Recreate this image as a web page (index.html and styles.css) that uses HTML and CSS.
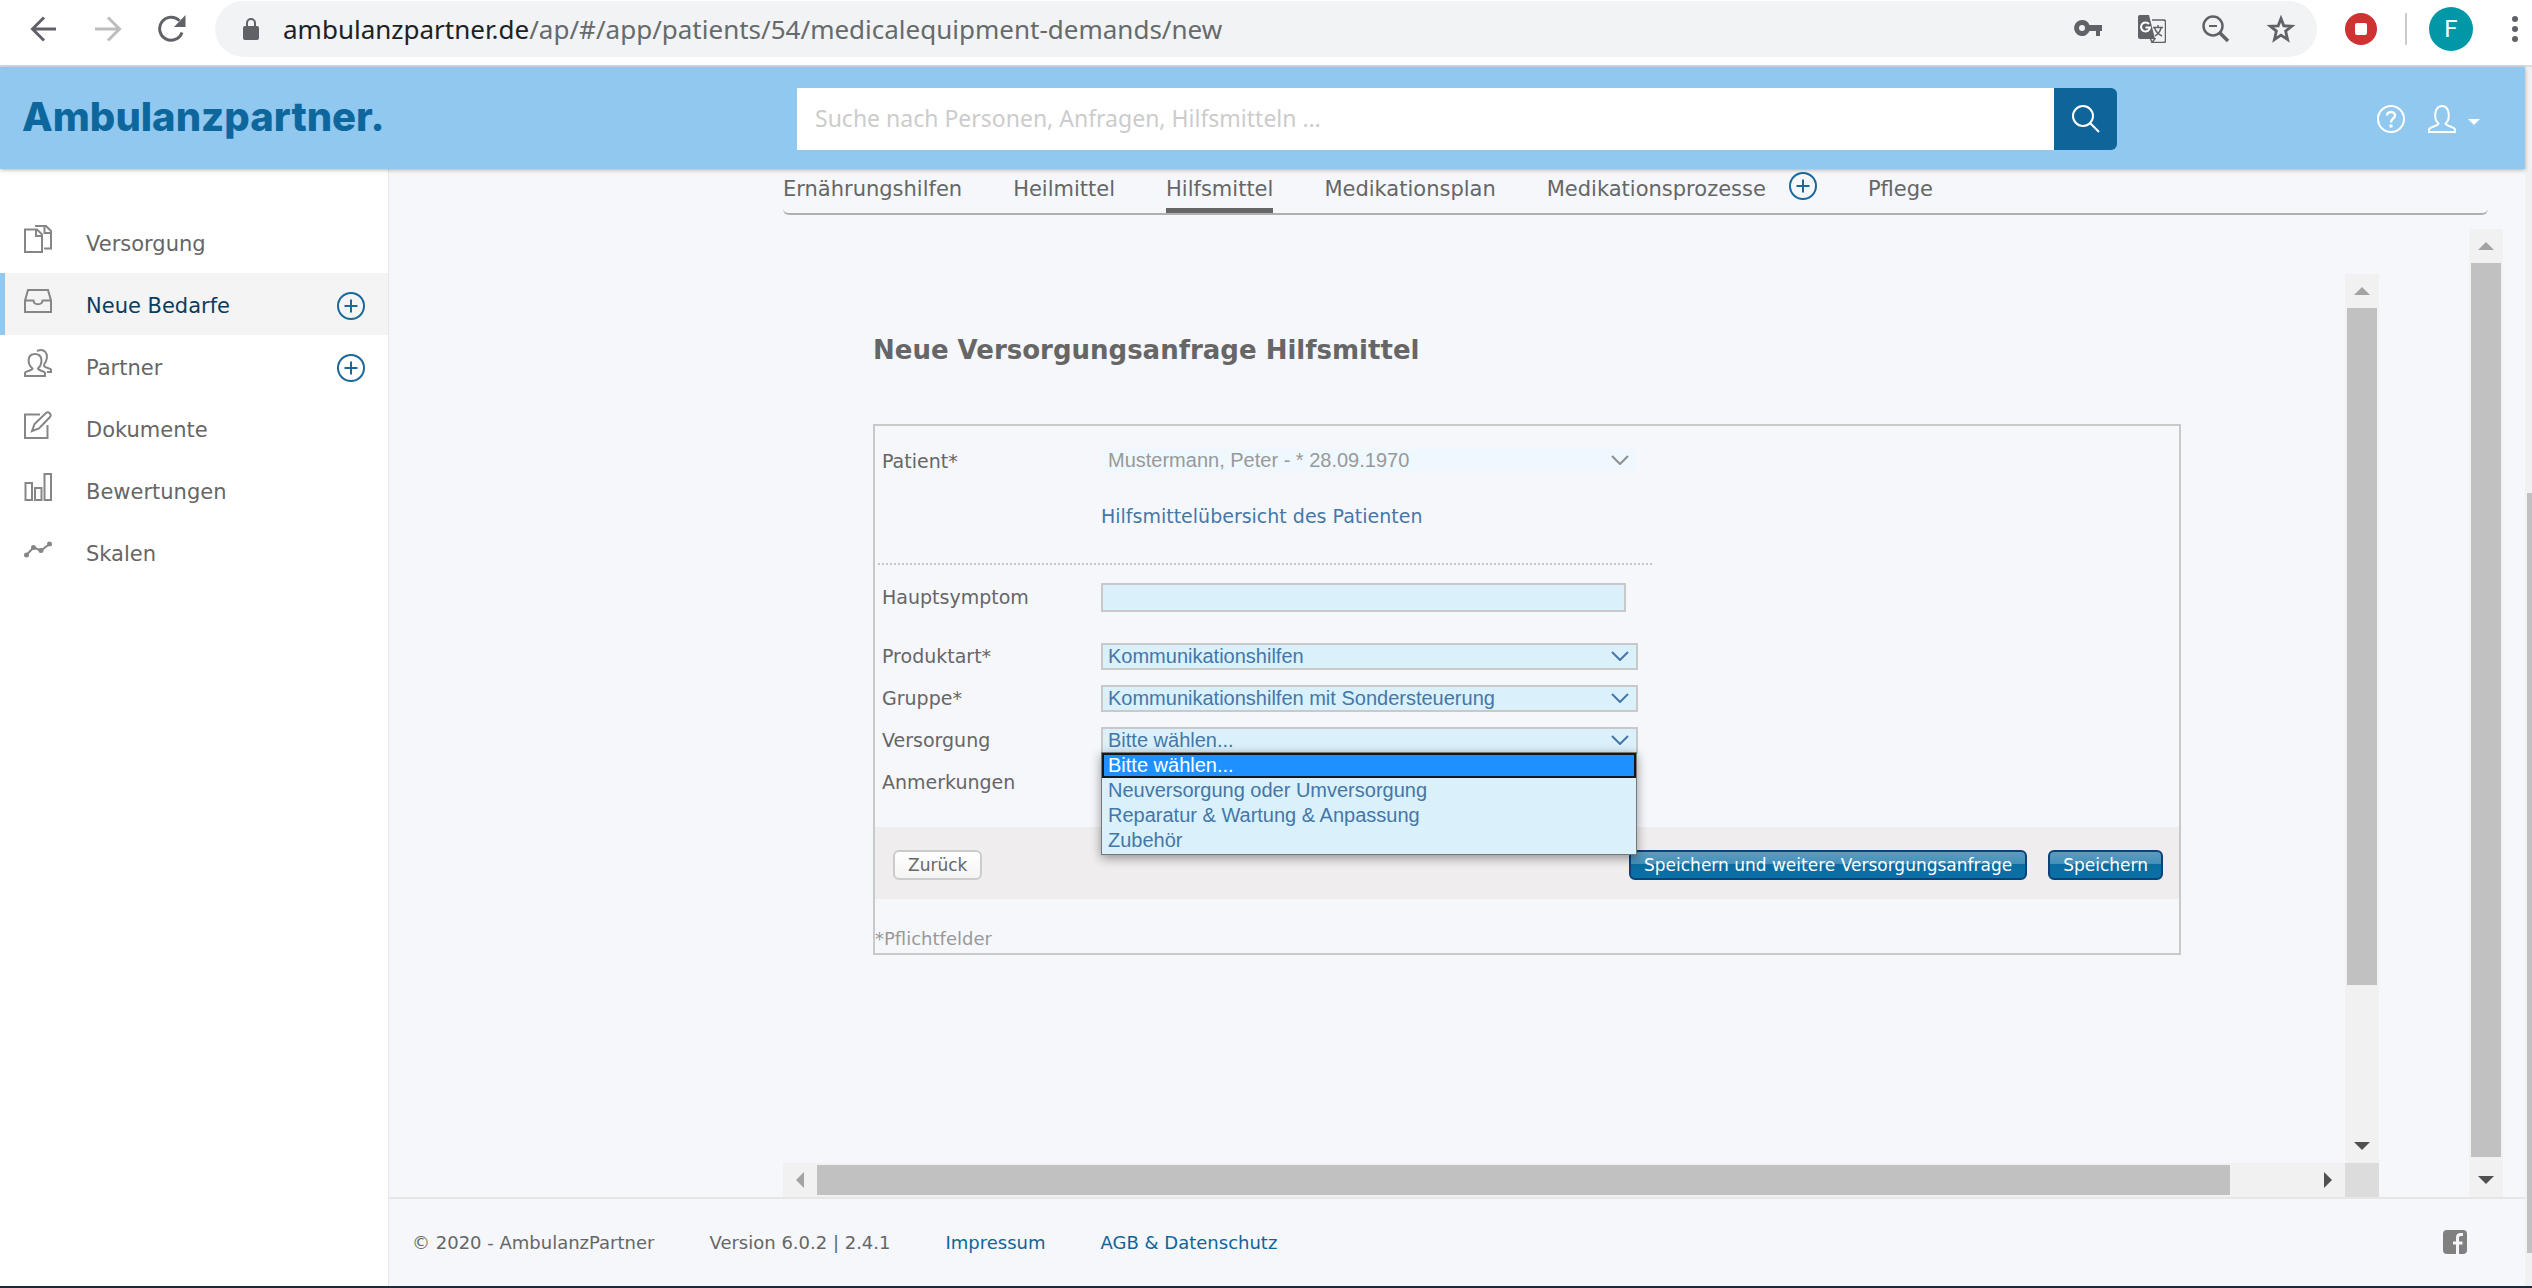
FILE: index.html
```html
<!DOCTYPE html>
<html lang="de">
<head>
<meta charset="UTF-8">
<meta name="viewport" content="width=device-width, initial-scale=1.0">
<title>Ambulanzpartner</title>
<link rel="stylesheet" href="styles.css">
</head>
<body>

<!-- Browserleiste -->
<div class="browser-bar">
    <button class="nav-btn" aria-label="Zurück">
        <svg width="28" height="28" viewBox="0 0 28 28"><path d="M26 14H3M14 2.500L2.500 14L14 25.500" fill="none" stroke="#5f6368" stroke-width="3"/></svg>
    </button>
    <button class="nav-btn" aria-label="Vorwärts">
        <svg width="28" height="28" viewBox="0 0 28 28"><path d="M1 14H25M14 2.500L25.500 14L14 25.500" fill="none" stroke="#bdbdbd" stroke-width="3"/></svg>
    </button>
    <button class="nav-btn" aria-label="Neu laden">
        <svg width="28" height="28" viewBox="0 0 28 28"><path d="M24 17.500A11.500 11.500 0 1 1 21.500 5.800" fill="none" stroke="#5f6368" stroke-width="3"/><path d="M27.500 0V12H16z" fill="#5f6368"/></svg>
    </button>
    <div class="address">
        <svg width="16" height="22" viewBox="0 0 16 22"><rect y="8" width="16" height="14" rx="2" fill="#5f6368"/><path d="M4 9V5a4 4 0 0 1 8 0V9" fill="none" stroke="#5f6368" stroke-width="2"/></svg>
        <span class="url"><span class="host">ambulanzpartner.de</span>/ap/#/app/patients/54/medicalequipment-demands/new</span>
        <div class="address-icons">
            <svg width="28" height="28" viewBox="0 0 28 28"><path fill-rule="evenodd" fill="#5f6368" d="M8 5a8 8 0 1 0 7.500 11H22v5h4v-5h2v-6H15.500A8 8 0 0 0 8 5zM8 10a3 3 0 1 1 0 6a3 3 0 0 1 0-6z"/></svg>
            <svg width="28" height="28" viewBox="0 0 28 28"><path d="M2 0H11L17 24H2a2 2 0 0 1-2-2V2a2 2 0 0 1 2-2z" fill="#5f6368"/><path d="M14 5H25.500a2 2 0 0 1 2 2V25.500a2 2 0 0 1-2 2H14L17.500 23M14 27L12.500 24" fill="none" stroke="#5f6368" stroke-width="1.500"/><path d="M11 9A4.500 4.500 0 1 0 12 12.500H7.500" fill="none" stroke="#fff" stroke-width="2"/><path d="M15 12.500H25M20 10V12.500M16.500 13C18 17 20 19 24 21M23 13C22 17 20 19 17 21" fill="none" stroke="#5f6368" stroke-width="1.500"/></svg>
            <svg width="28" height="28" viewBox="0 0 28 28"><circle cx="11" cy="11" r="9.500" fill="none" stroke="#5f6368" stroke-width="2.500"/><path d="M7 11H15" stroke="#5f6368" stroke-width="2"/><path d="M18 18L26 26" stroke="#5f6368" stroke-width="3.500"/></svg>
            <svg width="30" height="28" viewBox="0 0 30 28"><path d="M15 3.500L17.800 10.800L25.700 11.200L19.600 16.100L21.600 24.500L15 20.100L8.400 24.500L10.400 16.100L4.300 11.200L12.200 10.800z" fill="none" stroke="#5f6368" stroke-width="2.800"/></svg>
        </div>
    </div>
    <svg class="record" width="32" height="32" viewBox="0 0 32 32"><circle cx="16" cy="16" r="16" fill="#cf3232"/><rect x="10" y="10" width="12" height="12" rx="2" fill="#fff"/></svg>
    <span class="divider"></span>
    <button class="avatar" aria-label="Profil">F</button>
    <button class="menu-dots" aria-label="Menü"><i></i><i></i><i></i></button>
</div>

<div class="window">
    <div class="app">
        <header class="header">
            <a class="logo" href="#">Ambulanzpartner.</a>
            <form class="search">
                <input type="text" placeholder="Suche nach Personen, Anfragen, Hilfsmitteln …" aria-label="Suche">
                <button type="button" aria-label="Suchen">
                    <svg width="28" height="28" viewBox="0 0 28 28" fill="none" stroke="#fff" stroke-width="2"><circle cx="11" cy="11" r="10"/><path d="M18 18L27 27"/></svg>
                </button>
            </form>
            <div class="header-icons">
                <svg width="28" height="28" viewBox="0 0 28 28" fill="none" stroke="#fff" stroke-width="2"><circle cx="14" cy="14" r="13"/><path d="M10 10.500C10 5.800 18 5.800 18 10.500C18 13.500 14 13.500 14 17.500" stroke-width="2.400"/><circle cx="14" cy="21" r="0.800"/></svg>
                <svg width="28" height="28" viewBox="0 0 28 28" fill="none" stroke="#fff" stroke-width="2"><path d="M1 27V24.500C1 22 10 21 10.500 18.500C5.500 15 6 1 14 1S22.500 15 17.500 18.500C18 21 27 22 27 24.500V27z"/></svg>
                <svg class="caret" width="12" height="6" viewBox="0 0 12 6"><path d="M0 0H12L6 6z" fill="#fff"/></svg>
            </div>
        </header>

        <div class="main">
            <nav class="sidebar">
                <a class="nav-item" href="#">
                    <svg width="28" height="28" viewBox="0 0 28 28"><path d="M1 4.500H13L18 9.500V27H1zM12 4.500V11H18M11 1H22L27 6V23.500H20M20.500 1V8H27"/></svg>
                    <span>Versorgung</span>
                </a>
                <a class="nav-item active" href="#">
                    <svg width="28" height="28" viewBox="0 0 28 28"><path d="M1 13.500L4 3H24L27 13.500V25H1zM1 13.500H9.500C10 18.500 18 18.500 18.500 13.500H27"/></svg>
                    <span>Neue Bedarfe</span>
                    <svg class="plus" width="28" height="28" viewBox="0 0 28 28"><circle cx="14" cy="14" r="13"/><path d="M14 7.500V20.500M7.500 14H20.500"/></svg>
                </a>
                <a class="nav-item" href="#">
                    <svg width="28" height="28" viewBox="0 0 28 28"><path d="M1 27V24C1 22 8 22 8.500 19.500C3 15 3 5 11 5S19 15 14 19.500C14.500 22 21 22 21 24V27zM13 2C20 -1 25 4 22 12C21.500 14 20 15 20 16.500C20 19 27 19 27 21V23H23"/></svg>
                    <span>Partner</span>
                    <svg class="plus" width="28" height="28" viewBox="0 0 28 28"><circle cx="14" cy="14" r="13"/><path d="M14 7.500V20.500M7.500 14H20.500"/></svg>
                </a>
                <a class="nav-item" href="#">
                    <svg width="28" height="28" viewBox="0 0 28 28"><path d="M16 3.500H1V27H23.500V14M8 20L10.500 13L22 2C24.500 0 28 3.500 26 6L15 17.500z"/></svg>
                    <span>Dokumente</span>
                </a>
                <a class="nav-item" href="#">
                    <svg width="28" height="28" viewBox="0 0 28 28"><path d="M1.500 10H8V27H1.500zM11 15H17.500V27H11zM20.500 1H27V27H20.500z"/></svg>
                    <span>Bewertungen</span>
                </a>
                <a class="nav-item" href="#">
                    <svg width="28" height="28" viewBox="0 0 28 28"><path d="M2.500 20L9.500 12.500L17 15.500L25.500 9"/><g fill="#868686"><circle cx="2.500" cy="20" r="1.500"/><circle cx="9.500" cy="12.500" r="1.500"/><circle cx="17" cy="15.500" r="1.500"/><circle cx="25.500" cy="9" r="1.500"/></g></svg>
                    <span>Skalen</span>
                </a>
            </nav>

            <div class="content">
                <div class="tabs">
                    <a href="#">Ernährungshilfen</a>
                    <a href="#">Heilmittel</a>
                    <a class="active" href="#">Hilfsmittel</a>
                    <a href="#">Medikationsplan</a>
                    <a class="with-plus" href="#">Medikationsprozesse
                        <svg class="plus" width="28" height="28" viewBox="0 0 28 28"><circle cx="14" cy="14" r="13"/><path d="M14 7.500V20.500M7.500 14H20.500"/></svg>
                    </a>
                    <a href="#">Pflege</a>
                </div>

                <div class="outer-frame">
                    <div class="inner-frame">
                        <div class="frame-body">
                            <h1>Neue Versorgungsanfrage Hilfsmittel</h1>

                            <form class="panel">
                                <div class="row row-patient">
                                    <label for="patient">Patient*</label>
                                    <div class="select">
                                        <select id="patient" disabled><option>Mustermann, Peter - * 28.09.1970</option></select>
                                        <svg width="18" height="10" viewBox="0 0 18 10"><path d="M1 1L9 9L17 1"/></svg>
                                    </div>
                                </div>
                                <div class="row row-link">
                                    <a href="#">Hilfsmittelübersicht des Patienten</a>
                                </div>
                                <div class="separator"></div>
                                <div class="row row-symptom">
                                    <label for="symptom">Hauptsymptom</label>
                                    <input type="text" id="symptom">
                                </div>
                                <div class="row">
                                    <label for="produktart">Produktart*</label>
                                    <div class="select">
                                        <select id="produktart"><option>Kommunikationshilfen</option></select>
                                        <svg width="18" height="10" viewBox="0 0 18 10"><path d="M1 1L9 9L17 1"/></svg>
                                    </div>
                                </div>
                                <div class="row">
                                    <label for="gruppe">Gruppe*</label>
                                    <div class="select">
                                        <select id="gruppe"><option>Kommunikationshilfen mit Sondersteuerung</option></select>
                                        <svg width="18" height="10" viewBox="0 0 18 10"><path d="M1 1L9 9L17 1"/></svg>
                                    </div>
                                </div>
                                <div class="row">
                                    <label for="versorgung">Versorgung</label>
                                    <div class="select">
                                        <select id="versorgung"><option>Bitte wählen...</option></select>
                                        <svg width="18" height="10" viewBox="0 0 18 10"><path d="M1 1L9 9L17 1"/></svg>
                                        <ul class="options" role="listbox" aria-label="Versorgung">
                                            <li class="selected" role="option" aria-selected="true">Bitte wählen...</li>
                                            <li role="option">Neuversorgung oder Umversorgung</li>
                                            <li role="option">Reparatur &amp; Wartung &amp; Anpassung</li>
                                            <li role="option">Zubehör</li>
                                        </ul>
                                    </div>
                                </div>
                                <div class="row">
                                    <span class="label">Anmerkungen</span>
                                </div>
                                <div class="actions">
                                    <button type="button" class="btn">Zurück</button>
                                    <button type="button" class="btn btn-blue push">Speichern und weitere Versorgungsanfrage</button>
                                    <button type="button" class="btn btn-blue">Speichern</button>
                                </div>
                                <p class="hint">*Pflichtfelder</p>
                            </form>
                        </div>
                        <div class="scroll-v">
                            <span class="arrow up"></span>
                            <span class="track"><span class="thumb thumb-inner"></span></span>
                            <span class="arrow down"></span>
                        </div>
                        <div class="scroll-h">
                            <span class="arrow left"></span>
                            <span class="track"><span class="thumb thumb-bottom"></span></span>
                            <span class="arrow right"></span>
                        </div>
                        <div class="corner"></div>
                    </div>
                    <div class="scroll-v">
                        <span class="arrow up"></span>
                        <span class="track"><span class="thumb thumb-outer"></span></span>
                        <span class="arrow down"></span>
                    </div>
                </div>

                <footer class="footer">
                    <span>© 2020 - AmbulanzPartner</span>
                    <span>Version 6.0.2 | 2.4.1</span>
                    <a href="#">Impressum</a>
                    <a href="#">AGB &amp; Datenschutz</a>
                    <a class="facebook" href="#" aria-label="Facebook">
                        <svg width="24" height="24" viewBox="0 0 24 24"><rect width="24" height="24" rx="4" fill="#808080"/><path d="M14.500 24V7.500Q14.500 4.500 17.500 4.500H20M10 13H19.500" fill="none" stroke="#f5f7fb" stroke-width="3"/></svg>
                    </a>
                </footer>
            </div>
        </div>
    </div>
    <div class="page-scroll"><span></span></div>
</div>

</body>
</html>
```
FILE: styles.css
```css
* {
    box-sizing: border-box;
}

html, body {
    height: 100%;
    margin: 0;
}

body {
    display: flex;
    flex-direction: column;
    background: #f5f7fb;
    border-bottom: 2px solid #1c2a3c;
    color: #666;
    font-family: "DejaVu Sans", Verdana, sans-serif;
    font-size: 21px;
    overflow: hidden;
}

a {
    color: inherit;
    text-decoration: none;
}

button {
    border: 0;
    padding: 0;
    background: none;
    font-family: inherit;
}

svg {
    display: block;
    flex: none;
}

/* Browserleiste */
.browser-bar {
    display: flex;
    align-items: center;
    height: 67px;
    padding: 0 14px 8px 30px;
    background: #fff;
    border-bottom: 2px solid #dadce0;
}

.nav-btn {
    margin-right: 36px;
}

.address {
    flex: 1;
    display: flex;
    align-items: center;
    height: 56px;
    margin-left: -7px;
    padding: 0 21px 0 28px;
    border-radius: 28px;
    background: #f1f3f4;
}

.url {
    margin-left: 24px;
    font-family: "Noto Sans", "Open Sans", sans-serif;
    font-size: 26px;
    line-height: 36px;
    color: #666a6d;
}

.host {
    color: #202124;
}

.address-icons {
    display: flex;
    gap: 36px;
    margin-left: auto;
}

.record {
    margin-left: 28px;
}

.divider {
    width: 2px;
    height: 32px;
    margin: 0 22px 0 28px;
    background: #ccc;
}

.avatar {
    width: 44px;
    height: 44px;
    border-radius: 50%;
    background: #0097a7;
    color: #fff;
    font-family: Roboto, sans-serif;
    font-size: 24px;
}

.menu-dots {
    display: grid;
    gap: 4px;
    margin-left: 39px;
}

.menu-dots i {
    width: 6px;
    height: 6px;
    border-radius: 50%;
    background: #5f6368;
}

/* Fenster */
.window {
    flex: 1;
    display: flex;
    min-height: 0;
}

.app {
    flex: 1;
    display: flex;
    flex-direction: column;
    min-width: 0;
}

.page-scroll {
    width: 7px;
    padding: 426px 0 33px 2px;
    background: #f1f1f1;
}

.page-scroll span {
    display: block;
    height: 100%;
    background: #c1c1c1;
}

/* Kopfzeile */
.header {
    display: flex;
    align-items: center;
    height: 102px;
    padding: 2px 45px 0 22px;
    background: #91c8f0;
    box-shadow: 0 1px 4px rgba(0, 0, 0, 0.3);
    z-index: 1;
}

.logo {
    width: 775px;
    padding-bottom: 5px;
    color: #0d679c;
    font-family: Inter, sans-serif;
    font-size: 40px;
    font-weight: 800;
}

.search {
    display: flex;
    flex: 1;
    height: 62px;
    margin-right: 260px;
}

.search input {
    flex: 1;
    padding: 0 18px 3px;
    border: 0;
    background: #fff;
    font-family: "Noto Sans", sans-serif;
    font-size: 23px;
}

.search input::placeholder {
    color: #ccc;
}

.search button {
    display: flex;
    align-items: center;
    justify-content: center;
    width: 63px;
    border-radius: 0 6px 6px 0;
    background: #0f6599;
}

.header-icons {
    display: flex;
    align-items: center;
    gap: 23px;
}

.header-icons .caret {
    margin: 6px 0 0 -11px;
}

/* Navigation links */
.main {
    flex: 1;
    display: flex;
    min-height: 0;
}

.sidebar {
    width: 389px;
    padding-top: 42px;
    background: #fff;
    border-right: 1px solid #e4e6ea;
}

.nav-item {
    display: flex;
    align-items: center;
    height: 62px;
    padding: 0 23px 0 19px;
    border-left: 5px solid transparent;
}

.nav-item.active {
    background: #f4f4f4;
    border-color: #91c8f0;
    color: #0a3c5f;
}

.nav-item span {
    padding-top: 3px;
}

.nav-item svg {
    margin-right: 34px;
    margin-bottom: 6px;
    fill: none;
    stroke: #868686;
    stroke-width: 2;
}

.nav-item .plus {
    margin: 3px 0 0 auto;
}

.nav-item .plus,
.tabs .plus {
    fill: none;
    stroke: #1a689c;
    stroke-width: 2;
}

/* Inhalt */
.content {
    flex: 1;
    display: flex;
    flex-direction: column;
    min-width: 0;
}

.tabs {
    display: flex;
    gap: 51px;
    height: 46px;
    margin: 0 37px 0 394px;
    border-bottom: 2px solid #b0b0b0;
    border-radius: 0 0 6px 6px;
    line-height: 41px;
}

.tabs .active {
    border-bottom: 5px solid #666;
}

.tabs .with-plus {
    display: flex;
    gap: 23px;
}

.tabs .plus {
    margin-top: 3px;
}

.outer-frame {
    flex: 1;
    display: flex;
    gap: 90px;
    min-height: 0;
    margin: 14px 22px 0 394px;
}

.inner-frame {
    flex: 1;
    display: grid;
    grid-template-columns: 1fr 34px;
    grid-template-rows: 1fr 34px;
    margin-top: 45px;
}

.frame-body {
    min-height: 0;
    padding: 61px 164px 0 90px;
}

h1 {
    margin: 0 0 59px;
    font-size: 26px;
    line-height: 30px;
}

/* Formular */
.panel {
    padding-top: 21px;
    border: 2px solid #c9c9c9;
    font-size: 19px;
}

.row {
    display: flex;
    align-items: center;
    height: 42px;
    padding-left: 7px;
}

.row label,
.row .label {
    width: 219px;
}

.row-patient {
    height: 27px;
}

.row-link {
    height: 28px;
    margin-top: 28px;
    padding-left: 226px;
    color: #4477a8;
}

.separator {
    width: 774px;
    margin: 33px 0 17px 3px;
    border-top: 2px dotted #c6c6c6;
}

.row-symptom {
    height: 30px;
    margin-bottom: 23px;
}

.row input {
    width: 525px;
    height: 29px;
    border: 2px solid #c9c9c9;
    background: #daf0fb;
}

.select {
    position: relative;
    width: 537px;
}

.select select {
    display: block;
    appearance: none;
    width: 100%;
    height: 27px;
    padding: 0 5px;
    border: 2px solid #c9c9c9;
    border-radius: 0;
    background: #daf0fb;
    color: #4477a8;
    font-family: "Liberation Sans", Arial, sans-serif;
    font-size: 20px;
    line-height: 23px;
}

.select select:disabled {
    border-color: transparent;
    background: #eff8fe;
    background-clip: padding-box;
    color: #999;
    opacity: 1;
}

.select svg {
    position: absolute;
    top: 8px;
    right: 9px;
    fill: none;
    stroke: #4477a8;
    stroke-width: 2;
    pointer-events: none;
}

.row-patient .select svg {
    stroke: #8f8f8f;
}

.options {
    position: absolute;
    top: 25px;
    left: 0;
    width: 536px;
    margin: 0;
    padding: 0 0 1px;
    border: 1px solid #777;
    background: #daf0fb;
    box-shadow: 0 3px 10px rgba(0, 0, 0, 0.4);
    color: #4477a8;
    font-family: "Liberation Sans", Arial, sans-serif;
    font-size: 20px;
    line-height: 25px;
    list-style: none;
    z-index: 2;
}

.options li {
    padding-left: 6px;
}

.options .selected {
    padding-left: 4px;
    border: 2px solid #101820;
    background: #1e90ff;
    color: #fff;
    line-height: 21px;
}

.actions {
    display: flex;
    gap: 21px;
    height: 72px;
    margin-top: 24px;
    padding: 23px 16px 19px 18px;
    background: #efeded;
}

.btn {
    height: 30px;
    padding: 0 13px;
    border: 2px solid #ccc;
    border-radius: 6px;
    background: linear-gradient(#fff, #f4f4f4);
    color: #666;
    font-size: 17px;
}

.btn-blue {
    border-color: #0a4377;
    background: linear-gradient(#5b9cc0, #4590b8 45%, #0b6ca0 45%, #0b70a8);
    color: #fff;
}

.push {
    margin-left: auto;
}

.hint {
    margin: 28px 0 2px;
    font-size: 18px;
    line-height: 24px;
    color: #999;
}

/* Bildlaufleisten */
.scroll-v {
    display: flex;
    flex-direction: column;
    width: 34px;
    background: #f1f1f1;
}

.scroll-h {
    display: flex;
    height: 34px;
    background: #f1f1f1;
}

.track {
    flex: 1;
    display: block;
}

.thumb {
    display: block;
    background: #c1c1c1;
}

.scroll-v .thumb {
    width: 30px;
    margin: 0 2px;
}

.scroll-h .thumb {
    height: 30px;
    margin: 2px 0;
}

.thumb-outer {
    height: 99.3%;
}

.thumb-inner {
    height: 82.5%;
}

.thumb-bottom {
    width: 94.6%;
}

.arrow {
    display: flex;
    align-items: center;
    justify-content: center;
    width: 34px;
    height: 34px;
}

.arrow::before {
    content: "";
    border: 8px solid transparent;
}

.arrow.up::before {
    border-bottom-color: #a3a3a3;
    border-top: 0;
}

.arrow.down::before {
    border-top-color: #505050;
    border-bottom: 0;
}

.arrow.left::before {
    border-right-color: #a3a3a3;
    border-left: 0;
}

.arrow.right::before {
    border-left-color: #505050;
    border-right: 0;
}

.corner {
    background: #dcdcdc;
}

/* Fußzeile */
.footer {
    display: flex;
    align-items: center;
    gap: 55px;
    height: 89px;
    padding: 0 58px 1px 23px;
    border-top: 2px solid #e6e6e6;
    font-size: 18px;
}

.footer a {
    color: #0f6599;
}

.footer .facebook {
    margin-left: auto;
}
```
